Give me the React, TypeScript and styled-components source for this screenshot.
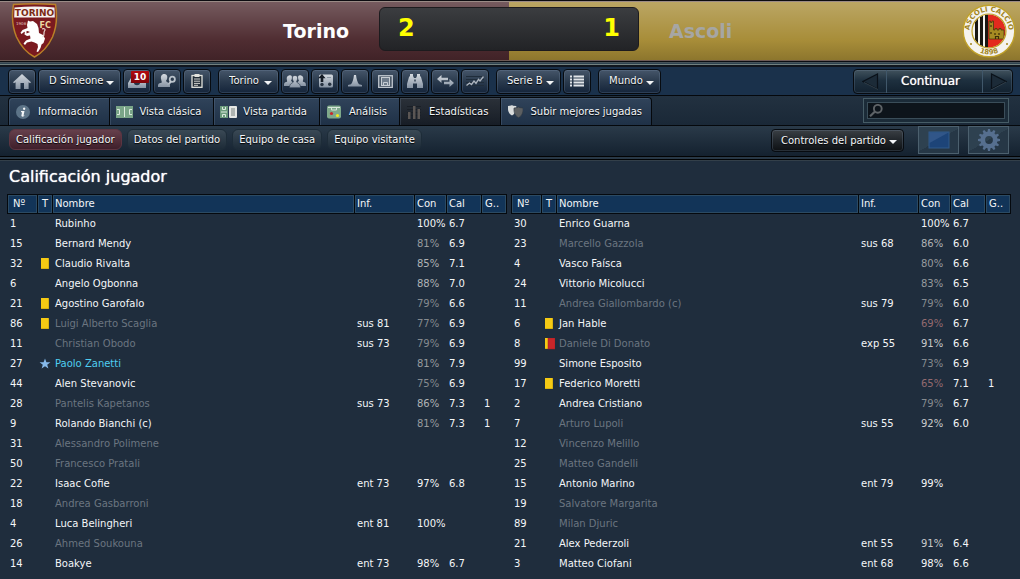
import React from "react";
import styled, { createGlobalStyle, css } from "styled-components";

const Global = createGlobalStyle`
  * { box-sizing: border-box; }
  body {
    margin: 0;
    background: #1f2d3d;
    color: #f4f6f8;
    font-family: "DejaVu Sans", Verdana, sans-serif;
    font-size: 10px;
    line-height: 12px;
  }
  button, input, select { font: inherit; color: inherit; }
  svg { display: block; flex: none; }
`;

/* ---------- score header ---------- */

const ScoreHeader = styled.header`
  display: grid;
  grid-template-columns: 1fr 260px 1fr;
  align-items: center;
  height: 62px;
  padding-right: 2px;
  border-top: 1px solid #0c0c10;
  border-bottom: 1px solid #0b0d12;
  background:
    linear-gradient(to right, transparent calc(50% - 1px), #c8b264 calc(50% - 1px)) 0 0 / 100% 0 no-repeat,
    linear-gradient(rgba(255, 255, 255, 0.24), rgba(255, 255, 255, 0.02) 65%, rgba(0, 0, 0, 0.16)),
    linear-gradient(to right, #4c292e calc(50% - 1px), #a68b35 calc(50% - 1px));
  box-shadow: inset 0 1px #9a8b86, inset 0 -1px #6c5a55;
`;

const Side = styled.div<{ $away?: boolean }>`
  display: flex;
  align-items: center;
  justify-content: space-between;
  height: 100%;
  padding: ${(p) => (p.$away ? "0 2px 0 30px" : "0 30px 0 11px")};
`;

const TeamName = styled.h2<{ $muted?: boolean }>`
  margin: 0;
  font-size: 19px;
  line-height: 22px;
  font-weight: bold;
  color: ${(p) => (p.$muted ? "#a6a6a4" : "#ffffff")};
`;

const Scoreboard = styled.div`
  display: flex;
  justify-content: space-between;
  align-self: start;
  height: 44px;
  margin-top: 6px;
  padding: 0 18px;
  border-radius: 6px;
  background: linear-gradient(#3b3d40, #222326);
  border: 1px solid #1c1b1e;
  color: #ffff00;
  font-size: 24px;
  line-height: 40px;
  font-weight: bold;
`;

/* ---------- toolbars ---------- */

const Divider = styled.div`
  height: 5px;
  background: #2e4350;
  border-top: 1px solid #47535a;
  border-bottom: 2px solid #10161e;
  box-shadow: inset 0 -1px #71807f;
`;

const NavBar = styled.nav`
  display: flex;
  align-items: center;
  gap: 7px;
  height: 29px;
  padding: 0 7px 0 8px;
  background: #1a314b;
  border-bottom: 1px solid #05080c;
`;

const Group = styled.div`
  display: flex;
  gap: 2px;
`;

const raised = css`
  height: 25px;
  border: 1px solid #070b10;
  border-radius: 4px;
  background: linear-gradient(#46566a, #2a3a4d 50%, #14243a);
  box-shadow: inset 0 0 0 1px rgba(130, 155, 180, 0.22);
`;

const IconButton = styled.button`
  ${raised}
  display: grid;
  place-items: center;
  width: 28px;
  padding: 0;
`;

const Badge = styled.span`
  position: absolute;
  top: -7px;
  left: 3px;
  width: 18px;
  height: 12px;
  border-radius: 1px;
  background: linear-gradient(#b30a10, #7e0509);
  color: #fff;
  font-weight: bold;
  font-size: 9px;
  line-height: 12px;
  text-align: center;
`;

const BadgeAnchor = styled.span`
  position: relative;
  display: block;
  margin-top: 4px;
`;

const MenuBox = styled.span<{ $width: number; $dark?: boolean }>`
  ${raised}
  display: inline-grid;
  align-items: center;
  width: ${(p) => p.$width}px;
  ${(p) =>
    p.$dark &&
    css`
      background: linear-gradient(#3b4045, #23282d 45%, #0d1013);
    `}
  select, svg { grid-area: 1 / 1; }
  svg { justify-self: end; margin-right: 6px; pointer-events: none; margin-top: 3px; }
`;

const MenuSelect = styled.select`
  appearance: none;
  width: 100%;
  height: 23px;
  padding: 0 0 0 10px;
  border: 0;
  background: none;
  text-shadow: 0 1px 1px #000;
  option { color: #111; }
`;

const Continue = styled.div`
  ${raised}
  display: grid;
  grid-template-columns: 32px 96px 32px;
  width: 160px;
  height: 25px;
  padding: 0;
  margin-left: auto;
  background: linear-gradient(#41525d, #1e303f 45%, #12212f);
`;

const ContinueButton = styled.button`
  display: grid;
  place-items: center;
  padding: 0;
  border: 0;
  background: none;
  & + & { border-left: 1px solid #40576a; }
`;

const ContinueMain = styled(ContinueButton)`
  padding-right: 8px;
  border-left: 1px solid #40576a;
  color: #fff;
  font-size: 12px;
  line-height: 14px;
  letter-spacing: normal;
  text-shadow: 0 0 1px #fff, 0 1px 2px #000;
`;

const TabBar = styled.div`
  display: flex;
  align-items: center;
  height: 29px;
  padding: 0 11px 0 8px;
  background: linear-gradient(#223140, #1a2837);
`;

const Tab = styled.button<{ $active?: boolean }>`
  display: grid;
  grid-template-columns: 18px auto;
  justify-items: center;
  align-items: center;
  gap: 6px;
  height: 28px;
  align-self: end;
  padding: 0 12px 0 5px;
  border: solid #05080c;
  border-width: 1px 0 0 1px;
  background: ${(p) =>
    p.$active ? "linear-gradient(#2b3139, #171d26)" : "linear-gradient(#30435a, #1f3147)"};
  box-shadow: inset 1px 1px rgba(130, 155, 180, 0.22);
  text-shadow: 0 1px 1px #000;
  white-space: nowrap;
  &:first-child { border-top-left-radius: 4px; }
  &:last-of-type { border-top-right-radius: 4px; border-right-width: 1px; padding-right: 9px; }
`;

const SearchBox = styled.label`
  display: flex;
  width: 146px;
  height: 25px;
  margin-left: auto;
  padding: 3px;
  border: 1px solid #465c66;
  background: #1b2b38;
`;

const SearchField = styled.span`
  display: flex;
  align-items: center;
  flex: 1;
  min-width: 0;
  padding-left: 1px;
  border: 1px solid #3a4d59;
  background: #0d141b;
`;

const SearchInput = styled.input`
  flex: 1;
  min-width: 0;
  height: 15px;
  padding: 0 4px;
  border: 0;
  outline: 0;
  background: none;
`;

const SubBar = styled.div`
  display: flex;
  align-items: flex-start;
  gap: 5px;
  height: 35px;
  padding: 0 11px 0 9px;
  border-top: 1px solid #05080c;
  border-bottom: 4px double #020304;
  background: linear-gradient(#2a3a49, #14212f);
`;

const Pill = styled.button<{ $active?: boolean }>`
  height: 21px;
  margin-top: 3px;
  padding: 0 6px;
  border: 1px solid ${(p) => (p.$active ? "#5d3541" : "#1d2c38")};
  border-radius: 6px;
  background: ${(p) =>
    p.$active ? "linear-gradient(#66404c, #3f1f2b)" : "linear-gradient(#3a4955, #1d2b38)"};
  text-shadow: 0 1px 1px #000;
  white-space: nowrap;
`;

const SubTools = styled.div`
  display: flex;
  margin-left: auto;
  align-items: flex-start;
  gap: 9px;
  ${MenuBox} { height: 23px; margin: 3px 5px 0 0; }
  ${MenuSelect} { height: 21px; padding-left: 9px; }
`;

const ToolButton = styled.button`
  display: grid;
  place-items: center;
  width: 41px;
  height: 28px;
  padding: 0;
  border: 1px solid #4c606e;
  background: linear-gradient(150deg, #2e4150 50%, #263746 50%);
`;

/* ---------- ratings ---------- */

const Content = styled.main`
  padding: 6px 9px 5px 7px;
  border-top: 1px solid #333f49;
`;

const Title = styled.h1`
  margin: 0 0 7px 2px;
  font-size: 16px;
  line-height: 20px;
  font-weight: normal;
  color: #fff;
  text-shadow: 0 0 1px #fff;
`;

const Tables = styled.div`
  display: grid;
  grid-template-columns: 1fr 1fr;
  gap: 4px;
`;

const Table = styled.table`
  width: 100%;
  table-layout: fixed;
  border-collapse: separate;
  border-spacing: 0;
  text-align: left;
`;

const Col = styled.col<{ $w?: number }>`
  width: ${(p) => (p.$w ? `${p.$w}px` : "auto")};
`;

const Th = styled.th`
  height: 20px;
  padding: 0 0 0 2px;
  border: solid #05090e;
  border-width: 1px 0 1px 1px;
  background: #123458;
  box-shadow: inset 0 0 0 1px #2b4a63;
  font-weight: normal;
  white-space: nowrap;
  &:first-child { padding-left: 5px; }
  &:nth-child(2) { padding-left: 4px; }
  &:last-child { border-right-width: 1px; padding-left: 3px; }
`;

const Td = styled.td<{ $color?: string }>`
  height: 20px;
  padding: 0 0 0 3px;
  color: ${(p) => p.$color ?? "inherit"};
  white-space: nowrap;
`;

/* ---------- icons ---------- */

const Silver = () => (
  <defs>
    <linearGradient id="silver" x1="0" y1="0" x2="0" y2="1">
      <stop offset="0" stopColor="#d5dae0" />
      <stop offset="1" stopColor="#8693a3" />
    </linearGradient>
  </defs>
);

const Ico = ({ w, h, children }: { w: number; h: number; children: React.ReactNode }) => (
  <svg width={w} height={h} viewBox={`0 0 ${w} ${h}`} fill="url(#silver)" aria-hidden="true">
    <Silver />
    {children}
  </svg>
);

const Caret = () => (
  <svg width="8" height="4" viewBox="0 0 8 4" aria-hidden="true">
    <path d="M0 0h8L4 4z" fill="#f2f4f6" />
  </svg>
);

const HomeIcon = () => (
  <Ico w={18} h={15}>
    <path d="M9 0 18 8.3 17 9.2 15.6 8.2V15H11V9H7.5v6H2.6V8.2L1 9.2 0 8.3z" />
  </Ico>
);

const InboxIcon = () => (
  <Ico w={18} h={10}>
    <path d="M3 0h12l3 5v5H0V5zM4.200 1 2.500 5h3.500c0 3 6 3 6 0h3.500L13.800 1z" fillRule="evenodd" />
  </Ico>
);

const StaffIcon = () => (
  <Ico w={18} h={14}>
    <path d="M4.500 0.500c2-1 4.800-.4 4.800 2.600 0 1.800-.5 2.700-1.300 3.600.3 1.800 3.500 1.500 4 4.300V13H0c0-3 .3-3.700 3.500-4.300C4.200 8 3.500 7.500 3.300 6 2.500 4 2.800 1.500 4.500.5z" />
    <circle cx="14.3" cy="5.300" r="2.600" fill="#2b3b4e" stroke="#b9c1ca" strokeWidth="1.800" />
    <path d="m12.300 7 1.400 1.300-3.700 4-1.600-1z" />
  </Ico>
);

const ClipboardIcon = () => (
  <Ico w={12} h={14}>
    <rect x="1" y="1.500" width="10" height="11.800" fill="#222c36" stroke="#e2e2dc" strokeWidth="1.300" />
    <path d="M3.500 0h5v3h-5z" fill="#e2e2dc" />
    <path d="M3 5h6M3 7.200h6M3 9.400h6M3 11.300h4" stroke="#cfd0cd" strokeWidth="1" />
  </Ico>
);

const TeamIcon = () => (
  <Ico w={22} h={14}>
    <path d="M5 1.500c1.500-.8 3 0 3 2 0 1.500-.4 2-.9 3 .3 1.500 2.400 1 2.400 4V12H0c0-3 .4-3.500 3-4.200C3.300 7 3 6.500 2.800 5.500 2.500 3.500 3 2 5 1.500zM17 1.500c-1.500-.8-3 0-3 2 0 1.500.4 2 .9 3-.3 1.500-2.400 1-2.400 4V12H22c0-3-.4-3.500-3-4.200-.3-.8 0-1.300.2-2.300.3-2-.2-3.500-2.200-4z" />
    <path d="M11 1.500c2 0 2.800 1.200 2.600 3-.1 1.500-.7 2.200-1 3 .2 2 3.600 1.300 3.900 5.500v.8h-11V13c.3-4.200 3.700-3.500 3.900-5.500-.3-.8-.9-1.500-1-3-.2-1.800.6-3 2.600-3z" stroke="#2c3b4d" strokeWidth="0.700" />
  </Ico>
);

const TacticIcon = () => (
  <Ico w={15} h={14}>
    <rect x="1" y="0.500" width="14" height="13" rx="1.500" />
    <path d="M4 0 7.500 4.200H5.300V8H2.700V4.200H0z" fill="#151c25" />
    <circle cx="4" cy="10.500" r="1.700" fill="#273341" />
    <circle cx="11.700" cy="10.300" r="1.700" fill="#273341" />
    <path d="M9 3.500h4" stroke="#8b97a4" />
  </Ico>
);

const ConeIcon = () => (
  <Ico w={14} h={12}>
    <path d="M6 0h2c.5 4 1.500 7.500 3 9.300L14 10v1.500H0V10l3-.7C4.500 7.500 5.500 4 6 0z" />
  </Ico>
);

const SquadIcon = () => (
  <Ico w={15} h={13}>
    <rect x=".7" y=".7" width="13.600" height="11.800" fill="#4a5867" stroke="#bdc4cc" strokeWidth="1.300" />
    <rect x="3.500" y="2.500" width="8" height="8" fill="#6f7c8b" stroke="#c6ccd3" />
    <path d="M5.500 10V7.500h4V10" fill="none" stroke="#c6ccd3" />
  </Ico>
);

const ScoutIcon = () => (
  <Ico w={16} h={14}>
    <path d="M3 0h3v2l1 2h2l1-2V0h3v2l1 1 2 7v4h-6V9.500H6V14H0v-4l2-7 1-1z" />
    <path d="M7.300 5.500h1.400V7.500H7.300z" fill="#2b3a4c" />
  </Ico>
);

const TransferIcon = () => (
  <Ico w={17} h={12}>
    <path d="M0 4 4.500 0v2.700H11v2.600H4.500V8zM17 8l-4.500-4v2.700H7v2.600h5.500V12z" />
  </Ico>
);

const TrendIcon = () => (
  <Ico w={18} h={12}>
    <path d="M0 1.500h18M0 4.500h18M0 7.500h18M0 10.500h18" stroke="#202d3b" />
    <path d="m.5 10.500 3-2.500 2 1.500L8 6l2 2.300 2.500-4L14 6l3.500-4.500" fill="none" stroke="#aeb6c0" strokeWidth="1.300" />
  </Ico>
);

const ListIcon = () => (
  <Ico w={14} h={12}>
    <path d="M0 1.500h2M3.500 1.500H14M0 4.500h2M3.500 4.500H14M0 7.500h2M3.500 7.500H14M0 10.500h2M3.500 10.500H14" stroke="#e1e5e9" strokeWidth="1.800" />
  </Ico>
);

const InfoIcon = () => (
  <Ico w={14} h={14}>
    <circle cx="7" cy="7" r="7" fill="#5d7488" />
    <path d="M8.200 2.500a1.200 1.200 0 1 1-.1 0zM5 6h3.500L7.600 10.300c0 .6.500.4 1.200 0-.6 1.600-3.700 2-3.400.3L6 7.200H5z" fill="#f4f6f8" />
  </Ico>
);

const PitchIcon = () => (
  <Ico w={17} h={12}>
    <rect width="17" height="12" fill="#7aa588" />
    <path d="M8.500 1v10M1 3.500h2.500v5H1M16 3.500h-2.500v5H16" fill="none" stroke="#dcebdf" />
  </Ico>
);

const SplitIcon = () => (
  <Ico w={17} h={12}>
    <rect width="8" height="12" fill="#6d9c7d" />
    <path d="M1 6h6M2.500 1v2.500h3V1M2.500 11V8.500h3V11" fill="none" stroke="#dcebdf" />
    <rect x="9" y="0" width="8" height="12" rx="1" fill="#e5e7e4" />
    <path d="M11 3h4M11 5h4M11 7h4M11 9h4" stroke="#77807e" />
  </Ico>
);

const AnalysisIcon = () => (
  <Ico w={14} h={14}>
    <rect y=".5" width="14" height="13" rx="2" fill="#7fa98b" />
    <path d="M1 2.500h12M4.500 3v2h5V3" fill="none" stroke="#d7e6da" />
    <circle cx="4.500" cy="8.500" r="1.600" fill="#c8282a" />
    <circle cx="10.500" cy="10.500" r="1.600" fill="#f2ea1c" />
  </Ico>
);

const StatsIcon = () => (
  <Ico w={14} h={14}>
    <path d="M0 1.500h14M0 4.500h14M0 7.500h14M0 10.500h14" stroke="#1a1f26" />
    <path d="M1 7h2.500v7H1zM6 1h2.500v13H6zM10.500 4H13v10h-2.500z" fill="#5b5654" />
  </Ico>
);

const ShieldsIcon = () => (
  <Ico w={15} h={13}>
    <path d="M0 1q4-.3 4-1 0 .8 4.200 1C9 6 7 9 4 10.500 1 9-.5 6 0 1z" fill="#d9dcdc" />
    <path d="M6 3q4-.3 4.500-1 .5.800 4.500 1c.5 5-1.500 8-4.500 9.800C7.500 11 5.500 8 6 3z" fill="#5c5f61" stroke="#2a3440" strokeWidth=".6" />
  </Ico>
);

const ArrowIcon = ({ flip }: { flip?: boolean }) => (
  <Ico w={17} h={17}>
    <path d={flip ? "M1.500 1v15L16 8.500z" : "M15.500 1v15L1 8.500z"} fill="#1c2b38" stroke="#0a1119" strokeWidth="1.200" />
    <path d={flip ? "M1 17 16 9" : "M16 16.500 2 9.500"} stroke="#43535f" strokeWidth=".7" />
  </Ico>
);

const SearchIcon = () => (
  <Ico w={14} h={13}>
    <circle cx="8.800" cy="4.800" r="3.900" fill="none" stroke="#5e6367" strokeWidth="1.900" />
    <path d="M6 7.500 1 12.300" stroke="#5e6367" strokeWidth="2.200" />
  </Ico>
);

const ScreenIcon = () => (
  <Ico w={22} h={18}>
    <rect x="1" y="1" width="20" height="16" fill="#1d4478" stroke="#315a8a" />
    <path d="M1.500 1.500h19L1.500 12z" fill="#45689a" opacity=".5" />
  </Ico>
);

const GearIcon = () => (
  <Ico w={22} h={22}>
    <g fill="#566f8f">
      {Array.from({ length: 12 }, (_, i) => (
        <path key={i} d="M9.300 4 10 0h2l.7 4z" transform={`rotate(${i * 30} 11 11)`} />
      ))}
    </g>
    <circle cx="11" cy="11" r="6.200" fill="none" stroke="#566f8f" strokeWidth="4.600" />
  </Ico>
);

const CardIcon = ({ kind }: { kind: "yellow" | "second" | "star" }) => {
  if (kind === "star")
    return (
      <svg width="12" height="12" viewBox="0 0 12 12" role="img" aria-label="Jugador destacado">
        <path d="M6 .5 7.400 4.200l4 .1-3.200 2.400 1.200 3.900L6 8.300l-3.400 2.300 1.200-3.900L.6 4.300l4-.1z" fill="#86b9ea" />
      </svg>
    );
  return (
    <svg width="12" height="12" viewBox="0 0 12 12" role="img" aria-label={kind === "yellow" ? "Amarilla" : "Segunda amarilla"}>
      <rect x="2" width="8" height="11" rx=".5" fill="#b89a10" />
      <rect x="2" width="7.500" height="10.500" fill="#f5ca14" />
      {kind === "second" && <rect x="5" width="7" height="11" fill="#c8262a" stroke="#a81c20" strokeWidth=".5" />}
    </svg>
  );
};

const TorinoCrest = () => (
  <svg width="47" height="56" viewBox="0 0 47 56" role="img" aria-label="Torino FC">
    <path d="M2.500 1.500Q23.500.2 44.500 1.500 47.500 20 41.500 34 35 48 23.500 54 12 48 5.500 34-.5 20 2.500 1.500z" fill="#7a1a20" stroke="#b98028" strokeWidth="1.500" />
    <path d="M3.500 4.500Q23.500 2.500 43.500 4.500L43.800 14.500H3.200z" fill="#f6f1ee" />
    <text x="23.500" y="13" textAnchor="middle" fontSize="9" fontWeight="bold" fill="#7c2a14">TORINO</text>
    <text x="5" y="21.500" fontSize="4" fill="#e0c5c0">1906</text>
    <text x="28.500" y="24.500" fontSize="8" fontWeight="bold" fill="#ecd9a4">FC</text>
    <path d="M17 17.500 19 18.500l3-.5 4 3 1.500 4 .5 5 4 2 2 3.500-1.500 4.500-2 1.500-1 3.500-2.500 4-1.500-.5 1.500-4.500-.5-3-3-1.500-3-1-4.500 1-2 2.500-1.500-1.500 2.500-3 4.500-2-.5-3-3 .5-2.500-1.500.5-3.500 1.500.2v2.300l3.500-1.500-2.500-1-3.500 1-2.500 2-1-1.200 2-2.800 5-2-.5-3z" fill="#fff" />
    <path d="M31.500 34c3-2 .5-4 2-6 1.500-2-.5-3-2.500-2" fill="none" stroke="#eadbd8" strokeWidth="1.200" />
  </svg>
);

const AscoliCrest = () => (
  <svg width="54" height="54" viewBox="0 0 54 54" role="img" aria-label="Ascoli Calcio 1898">
    <defs>
      <path id="ascoli-top" d="M8.800 34A19.500 19.500 0 1 1 45.200 34" />
      <path id="ascoli-bottom" d="M9 42.100A23.500 23.500 0 0 0 45 42.100" />
      <clipPath id="ascoli-disc"><circle cx="27" cy="27" r="16.500" /></clipPath>
    </defs>
    <circle cx="27" cy="27" r="25.800" fill="#f5f3ee" stroke="#c0a12a" strokeWidth="1.400" />
    <g clipPath="url(#ascoli-disc)">
      <path d="M0 0h54v54H0z" fill="#f5f3ee" />
      <path d="M26 0h28v54H26z" fill="#e32a1e" />
      <path d="M13 8h3v38h-3zM18 8h3v38h-3zM23 8h3v38h-3z" fill="#191712" />
      <path d="M27 17h1.500v1.500H30V17h1.500v9H33v-1.500h2V26h2v-1.500h2V26h3v9H27z" fill="#a68a22" stroke="#4d3a0c" strokeWidth=".8" />
      <path d="M29 21v2M29 28v2M33 29v2M37 29v2M33.500 35v-2.500h3V35" stroke="#3c2c08" strokeWidth="1.200" fill="none" />
    </g>
    <circle cx="27" cy="27" r="17" fill="none" stroke="#c0a12a" strokeWidth="1.200" />
    <text fontSize="7" fontWeight="bold" fill="#a2851d">
      <textPath href="#ascoli-top" startOffset="50%" textAnchor="middle">ASCOLI CALCIO</textPath>
    </text>
    <text fontSize="7" fontWeight="bold" fill="#a2851d">
      <textPath href="#ascoli-bottom" startOffset="50%" textAnchor="middle">1898</textPath>
    </text>
    <circle cx="9" cy="40" r="1" fill="#a2851d" />
    <circle cx="45" cy="40" r="1" fill="#a2851d" />
  </svg>
);

/* ---------- data ---------- */

type Player = {
  no: number;
  name: string;
  mark?: "yellow" | "second" | "star";
  off?: boolean;
  info?: string;
  con?: number;
  cal?: string;
  goals?: number;
};

const home: Player[] = [
  { no: 1, name: "Rubinho", con: 100, cal: "6.7" },
  { no: 15, name: "Bernard Mendy", con: 81, cal: "6.9" },
  { no: 32, name: "Claudio Rivalta", mark: "yellow", con: 85, cal: "7.1" },
  { no: 6, name: "Angelo Ogbonna", con: 88, cal: "7.0" },
  { no: 21, name: "Agostino Garofalo", mark: "yellow", con: 79, cal: "6.6" },
  { no: 86, name: "Luigi Alberto Scaglia", mark: "yellow", off: true, info: "sus 81", con: 77, cal: "6.9" },
  { no: 11, name: "Christian Obodo", off: true, info: "sus 73", con: 79, cal: "6.9" },
  { no: 27, name: "Paolo Zanetti", mark: "star", con: 81, cal: "7.9" },
  { no: 44, name: "Alen Stevanovic", con: 75, cal: "6.9" },
  { no: 28, name: "Pantelis Kapetanos", off: true, info: "sus 73", con: 86, cal: "7.3", goals: 1 },
  { no: 9, name: "Rolando Bianchi (c)", con: 81, cal: "7.3", goals: 1 },
  { no: 31, name: "Alessandro Polimene", off: true },
  { no: 50, name: "Francesco Pratali", off: true },
  { no: 22, name: "Isaac Cofie", info: "ent 73", con: 97, cal: "6.8" },
  { no: 18, name: "Andrea Gasbarroni", off: true },
  { no: 4, name: "Luca Belingheri", info: "ent 81", con: 100 },
  { no: 26, name: "Ahmed Soukouna", off: true },
  { no: 14, name: "Boakye", info: "ent 73", con: 98, cal: "6.7" },
];

const away: Player[] = [
  { no: 30, name: "Enrico Guarna", con: 100, cal: "6.7" },
  { no: 23, name: "Marcello Gazzola", off: true, info: "sus 68", con: 86, cal: "6.0" },
  { no: 4, name: "Vasco Faísca", con: 80, cal: "6.6" },
  { no: 24, name: "Vittorio Micolucci", con: 83, cal: "6.5" },
  { no: 11, name: "Andrea Giallombardo (c)", off: true, info: "sus 79", con: 79, cal: "6.0" },
  { no: 6, name: "Jan Hable", mark: "yellow", con: 69, cal: "6.7" },
  { no: 8, name: "Daniele Di Donato", mark: "second", off: true, info: "exp 55", con: 91, cal: "6.6" },
  { no: 99, name: "Simone Esposito", con: 73, cal: "6.9" },
  { no: 17, name: "Federico Moretti", mark: "yellow", con: 65, cal: "7.1", goals: 1 },
  { no: 2, name: "Andrea Cristiano", con: 79, cal: "6.7" },
  { no: 7, name: "Arturo Lupoli", off: true, info: "sus 55", con: 92, cal: "6.0" },
  { no: 12, name: "Vincenzo Melillo", off: true },
  { no: 25, name: "Matteo Gandelli", off: true },
  { no: 15, name: "Antonio Marino", info: "ent 79", con: 99 },
  { no: 19, name: "Salvatore Margarita", off: true },
  { no: 89, name: "Milan Djuric", off: true },
  { no: 21, name: "Alex Pederzoli", info: "ent 55", con: 91, cal: "6.4" },
  { no: 3, name: "Matteo Ciofani", info: "ent 68", con: 98, cal: "6.6" },
];

const conditionColor = (con?: number) => {
  if (con === undefined || con >= 97) return "#f4f6f8";
  if (con < 70) return "#936a70";
  if (con < 80) return "#858a8f";
  if (con < 85) return "#979b9f";
  if (con < 90) return "#b0b3b6";
  return "#c8cacc";
};

const nameColor = (p: Player) => (p.mark === "star" ? "#4fcdf0" : p.off ? "#6b7580" : "#f4f6f8");

const columns: { label: string; width?: number }[] = [
  { label: "Nº", width: 30 },
  { label: "T", width: 15 },
  { label: "Nombre" },
  { label: "Inf.", width: 60 },
  { label: "Con", width: 32 },
  { label: "Cal", width: 35 },
  { label: "G..", width: 26 },
];

const CardCell = styled(Td)`
  padding: 0 0 0 2px;
`;

const RatingTable = ({ team, players }: { team: string; players: Player[] }) => (
  <Table aria-label={team}>
    <colgroup>
      {columns.map((c) => (
        <Col key={c.label} $w={c.width} />
      ))}
    </colgroup>
    <thead>
      <tr>
        {columns.map((c) => (
          <Th key={c.label} scope="col">{c.label}</Th>
        ))}
      </tr>
    </thead>
    <tbody>
      {players.map((p) => (
        <tr key={p.no}>
          <Td>{p.no}</Td>
          <CardCell>{p.mark && <CardIcon kind={p.mark} />}</CardCell>
          <Td $color={nameColor(p)}>{p.name}</Td>
          <Td>{p.info}</Td>
          <Td $color={conditionColor(p.con)}>{p.con !== undefined && `${p.con}%`}</Td>
          <Td>{p.cal}</Td>
          <Td>{p.goals}</Td>
        </tr>
      ))}
    </tbody>
  </Table>
);

const Menu = ({ label, width, dark }: { label: string; width: number; dark?: boolean }) => (
  <MenuBox $width={width} $dark={dark}>
    <MenuSelect aria-label={label}>
      <option>{label}</option>
    </MenuSelect>
    <Caret />
  </MenuBox>
);

const tabs = [
  { label: "Información", icon: <InfoIcon /> },
  { label: "Vista clásica", icon: <PitchIcon /> },
  { label: "Vista partida", icon: <SplitIcon /> },
  { label: "Análisis", icon: <AnalysisIcon /> },
  { label: "Estadísticas", icon: <StatsIcon />, active: true },
  { label: "Subir mejores jugadas", icon: <ShieldsIcon /> },
];

const views = ["Calificación jugador", "Datos del partido", "Equipo de casa", "Equipo visitante"];

export default function App() {
  return (
    <>
      <Global />
      <ScoreHeader>
        <Side>
          <TorinoCrest />
          <TeamName>Torino</TeamName>
        </Side>
        <Scoreboard>
          <span>2</span>
          <span>1</span>
        </Scoreboard>
        <Side $away>
          <TeamName $muted>Ascoli</TeamName>
          <AscoliCrest />
        </Side>
      </ScoreHeader>
      <Divider />
      <NavBar>
        <Group>
          <IconButton aria-label="Inicio"><HomeIcon /></IconButton>
          <Menu label="D Simeone" width={83} />
          <IconButton aria-label="Mensajes">
            <BadgeAnchor>
              <InboxIcon />
              <Badge>10</Badge>
            </BadgeAnchor>
          </IconButton>
          <IconButton aria-label="Personal"><StaffIcon /></IconButton>
          <IconButton aria-label="Notas"><ClipboardIcon /></IconButton>
        </Group>
        <Group>
          <Menu label="Torino" width={61} />
          <IconButton aria-label="Plantilla"><TeamIcon /></IconButton>
          <IconButton aria-label="Tácticas"><TacticIcon /></IconButton>
          <IconButton aria-label="Entrenamiento"><ConeIcon /></IconButton>
          <IconButton aria-label="Calendario"><SquadIcon /></IconButton>
          <IconButton aria-label="Ojeadores"><ScoutIcon /></IconButton>
          <IconButton aria-label="Traspasos"><TransferIcon /></IconButton>
          <IconButton aria-label="Finanzas"><TrendIcon /></IconButton>
        </Group>
        <Group>
          <Menu label="Serie B" width={65} />
          <IconButton aria-label="Clasificación"><ListIcon /></IconButton>
        </Group>
        <Menu label="Mundo" width={63} />
        <Continue>
          <ContinueButton aria-label="Atrás"><ArrowIcon /></ContinueButton>
          <ContinueMain>Continuar</ContinueMain>
          <ContinueButton aria-label="Adelante"><ArrowIcon flip /></ContinueButton>
        </Continue>
      </NavBar>
      <TabBar>
        {tabs.map((t) => (
          <Tab key={t.label} $active={t.active}>
            {t.icon}
            <span>{t.label}</span>
          </Tab>
        ))}
        <SearchBox>
          <SearchField>
            <SearchIcon />
            <SearchInput type="text" aria-label="Buscar" />
          </SearchField>
        </SearchBox>
      </TabBar>
      <SubBar>
        {views.map((v, i) => (
          <Pill key={v} $active={i === 0}>{v}</Pill>
        ))}
        <SubTools>
          <Menu label="Controles del partido" width={133} dark />
          <ToolButton aria-label="Pantalla"><ScreenIcon /></ToolButton>
          <ToolButton aria-label="Ajustes"><GearIcon /></ToolButton>
        </SubTools>
      </SubBar>
      <Content>
        <Title>Calificación jugador</Title>
        <Tables>
          <RatingTable team="Torino" players={home} />
          <RatingTable team="Ascoli" players={away} />
        </Tables>
      </Content>
    </>
  );
}
